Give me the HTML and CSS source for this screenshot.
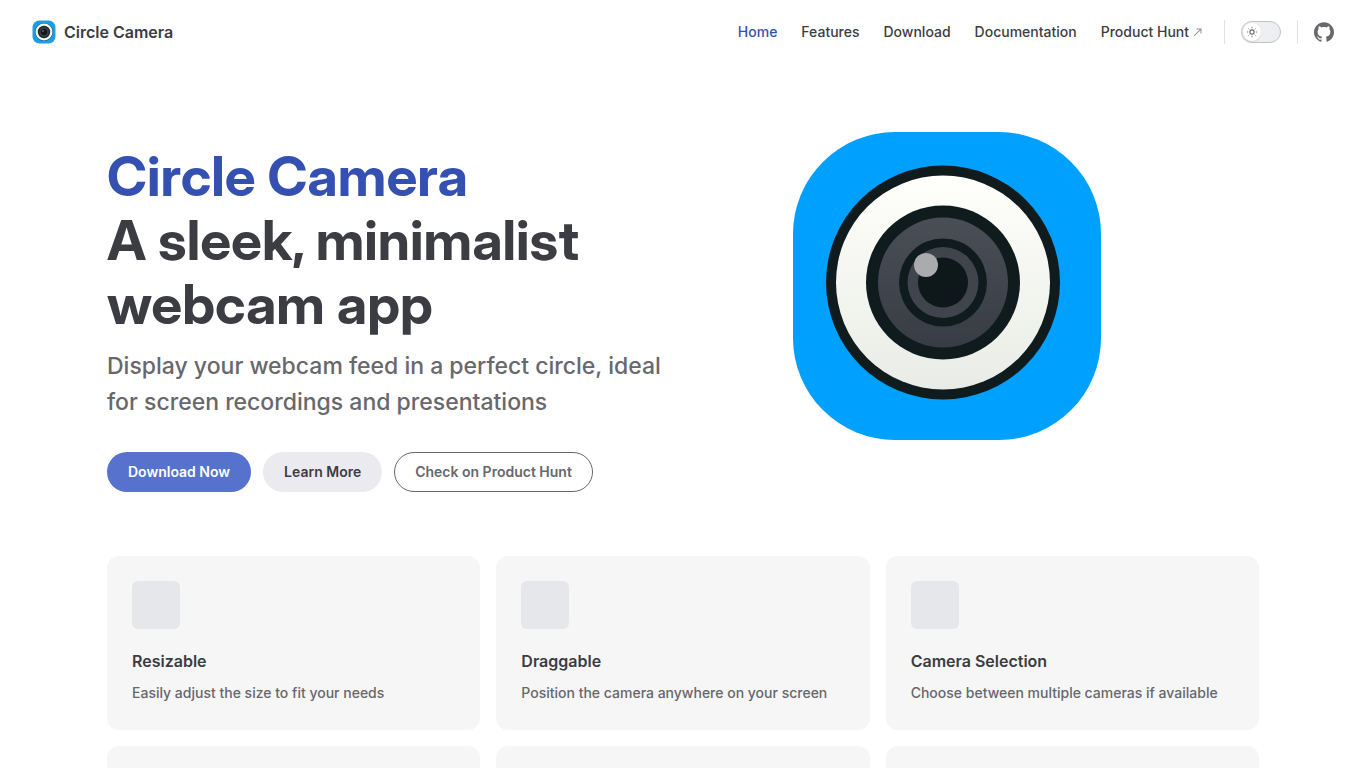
FILE: index.html
```html
<!DOCTYPE html>
<html lang="en">
<head>
<meta charset="utf-8">
<meta name="viewport" content="width=device-width, initial-scale=1">
<title>Circle Camera</title>
<link rel="stylesheet" href="styles.css">
</head>
<body>
<svg class="defs" width="0" height="0" aria-hidden="true">
  <defs>
    <linearGradient id="ring" x1="0" y1="0" x2="0" y2="1"><stop offset="0" stop-color="#fffffb"/><stop offset="1" stop-color="#e9ece6"/></linearGradient>
    <linearGradient id="lens" x1="0" y1="0" x2="0" y2="1"><stop offset="0" stop-color="#4a4e56"/><stop offset="1" stop-color="#383d45"/></linearGradient>
    <symbol id="camera" viewBox="0 0 308 308">
      <rect width="308" height="308" rx="102" fill="#00a0ff"/>
      <circle cx="150" cy="150.5" r="117" fill="#101b1e"/>
      <circle cx="150" cy="150.5" r="107" fill="url(#ring)"/>
      <circle cx="150" cy="150.5" r="77" fill="#101b1e"/>
      <circle cx="150" cy="150.5" r="65" fill="url(#lens)"/>
      <circle cx="150" cy="150.5" r="44" fill="#101b1e"/>
      <circle cx="150" cy="150.5" r="35.5" fill="#40454d"/>
      <circle cx="150" cy="150.5" r="25" fill="#0e171a"/>
      <circle cx="133" cy="133" r="12" fill="#a9abac"/>
    </symbol>
  </defs>
</svg>
<header class="nav">
  <a class="brand" href="#"><svg class="brand-logo" viewBox="0 0 24 24" aria-hidden="true"><rect x="0.5" y="0.5" width="23" height="23" rx="7" fill="#1b9fe4"/><circle cx="12" cy="12" r="9" fill="#14485f"/><circle cx="12" cy="12" r="8.5" fill="#f4f6f4"/><circle cx="12" cy="12" r="6.2" fill="#17242b"/><circle cx="12" cy="12" r="4.9" fill="#3a3f45"/><circle cx="12" cy="12" r="3.2" fill="#10171a"/><circle cx="11" cy="11" r="1" fill="#666"/></svg>Circle Camera</a>
  <div class="nav-right">
    <nav class="menu">
      <a class="active" href="#">Home</a>
      <a href="#features">Features</a>
      <a href="#download">Download</a>
      <a href="#docs">Documentation</a>
      <a class="external" href="#hunt">Product Hunt<svg class="arrow" viewBox="0 0 24 24" aria-hidden="true"><path d="M9 5v2h6.59L4 18.59 5.41 20 17 8.41V15h2V5H9z"/></svg></a>
    </nav>
    <div class="group"><button class="switch" type="button" role="switch" aria-checked="false" aria-label="Dark theme"><span class="knob"><svg class="sun" viewBox="0 0 24 24" aria-hidden="true"><circle cx="12" cy="12" r="4.2" fill="none" stroke="currentColor" stroke-width="2.2"/><path fill="none" stroke="currentColor" stroke-width="2" stroke-linecap="round" d="M12 3v.5M12 20.500v.5M5.600 5.600l.4.4M18 18l.4.4M3 12h.5M20.500 12h.5M5.600 18.400l.4-.4M18 6l.4-.4"/></svg></span></button></div>
    <div class="group"><a class="github" href="#github" aria-label="GitHub"><svg viewBox="0 0 24 24" aria-hidden="true"><path d="M12 .297c-6.63 0-12 5.373-12 12 0 5.303 3.438 9.8 8.205 11.385.6.113.82-.258.82-.577 0-.285-.01-1.04-.015-2.04-3.338.724-4.042-1.61-4.042-1.61C4.422 18.07 3.633 17.7 3.633 17.7c-1.087-.744.084-.729.084-.729 1.205.084 1.838 1.236 1.838 1.236 1.07 1.835 2.809 1.305 3.495.998.108-.776.417-1.305.76-1.605-2.665-.3-5.466-1.332-5.466-5.93 0-1.31.465-2.38 1.235-3.22-.135-.303-.54-1.523.105-3.176 0 0 1.005-.322 3.3 1.23.96-.267 1.98-.399 3-.405 1.02.006 2.04.138 3 .405 2.28-1.552 3.285-1.23 3.285-1.23.645 1.653.24 2.873.12 3.176.765.84 1.23 1.91 1.23 3.22 0 4.61-2.805 5.625-5.475 5.92.42.36.81 1.096.81 2.22 0 1.606-.015 2.896-.015 3.286 0 .315.21.69.825.57C20.565 22.092 24 17.592 24 12.297c0-6.627-5.373-12-12-12"/></svg></a></div>
  </div>
</header>
<main class="page">
  <section class="hero">
    <div class="intro">
      <h1><span class="name">Circle Camera</span><span class="title">A sleek, minimalist webcam app</span></h1>
      <p class="tagline">Display your webcam feed in a perfect circle, ideal for screen recordings and presentations</p>
      <div class="actions">
        <a class="button primary" href="#download">Download Now</a>
        <a class="button soft" href="#features">Learn More</a>
        <a class="button outline" href="#hunt">Check on Product Hunt</a>
      </div>
    </div>
    <div class="art"><svg class="art-logo" role="img" aria-label="Circle Camera logo"><use href="#camera"/></svg></div>
  </section>
  <section class="features" id="features">
    <article class="card"><div class="icon"></div><h2>Resizable</h2><p>Easily adjust the size to fit your needs</p></article>
    <article class="card"><div class="icon"></div><h2>Draggable</h2><p>Position the camera anywhere on your screen</p></article>
    <article class="card"><div class="icon"></div><h2>Camera Selection</h2><p>Choose between multiple cameras if available</p></article>
    <article class="card"></article>
    <article class="card"></article>
    <article class="card"></article>
  </section>
</main>
</body>
</html>
```
FILE: styles.css
```css
* { box-sizing: border-box; }
body { margin: 0; background: #fff; color: #3c3c43; font-family: Inter, "Liberation Sans", sans-serif; font-size: 16px; line-height: 24px; }
h1, h2, p { margin: 0; }
a { color: inherit; text-decoration: none; }
svg { display: block; }
.defs { position: absolute; }

.nav { display: flex; align-items: center; justify-content: space-between; height: 64px; padding: 0 32px; }
.brand { display: flex; align-items: center; gap: 8px; font-weight: 600; }
.brand-logo { width: 24px; height: 24px; }
.nav-right { display: flex; align-items: center; }
.menu { display: flex; gap: 24px; padding-right: 20px; font-size: 14px; font-weight: 500; }
.menu .active { color: #3451b2; }
.external { display: flex; align-items: center; gap: 3px; }
.arrow { width: 12px; height: 12px; fill: #929295; }
.group { display: flex; align-items: center; height: 24px; padding-left: 16px; border-left: 1px solid #e2e2e3; }
.group + .group { margin-left: 16px; }
.switch { width: 40px; height: 22px; padding: 1px; border: 1px solid #c2c2c4; border-radius: 11px; background: #eeeff2; }
.knob { display: flex; align-items: center; justify-content: center; width: 18px; height: 18px; border-radius: 50%; background: #fff; box-shadow: 0 1px 2px rgba(0,0,0,.04), 0 1px 2px rgba(0,0,0,.06); }
.sun { width: 12px; height: 12px; color: #67676c; }
.github svg { width: 20px; height: 20px; fill: #67676c; }

.page { max-width: 1280px; margin: 0 auto; padding: 0 64px; }
.hero { display: flex; padding: 48px 0 64px; }
.intro { flex: 0 1 592px; padding-top: 32px; }
h1 { font-family: "Inter Display", Inter, "Liberation Sans", sans-serif; font-size: 55px; line-height: 64px; font-weight: 700; }
.name, .title { display: block; }
.name { color: #3451b2; }
.tagline { max-width: 576px; padding-top: 12px; font-size: 23px; line-height: 36px; font-weight: 500; color: #67676c; }
.actions { display: flex; gap: 12px; padding-top: 32px; }
.button { padding: 0 20px; border: 1px solid transparent; border-radius: 20px; font-size: 14px; font-weight: 600; line-height: 38px; }
.primary { background: #5672cd; color: #fff; }
.soft { background: #ebebef; }
.outline { border-color: #67676c; color: #67676c; }
.art { display: flex; flex: 1; justify-content: center; align-items: center; padding: 0 64px 32px 0; }
.art-logo { width: 308px; height: 308px; }

.features { display: grid; grid-template-columns: repeat(3, 1fr); gap: 16px; }
.card { padding: 25px; border-radius: 12px; background: #f6f6f7; }
.icon { width: 48px; height: 48px; margin-bottom: 20px; border-radius: 6px; background: #e5e7eb; }
.card h2 { font-size: 16px; line-height: 24px; font-weight: 600; }
.card p { padding-top: 8px; font-size: 14px; line-height: 24px; font-weight: 500; color: #67676c; }
```
